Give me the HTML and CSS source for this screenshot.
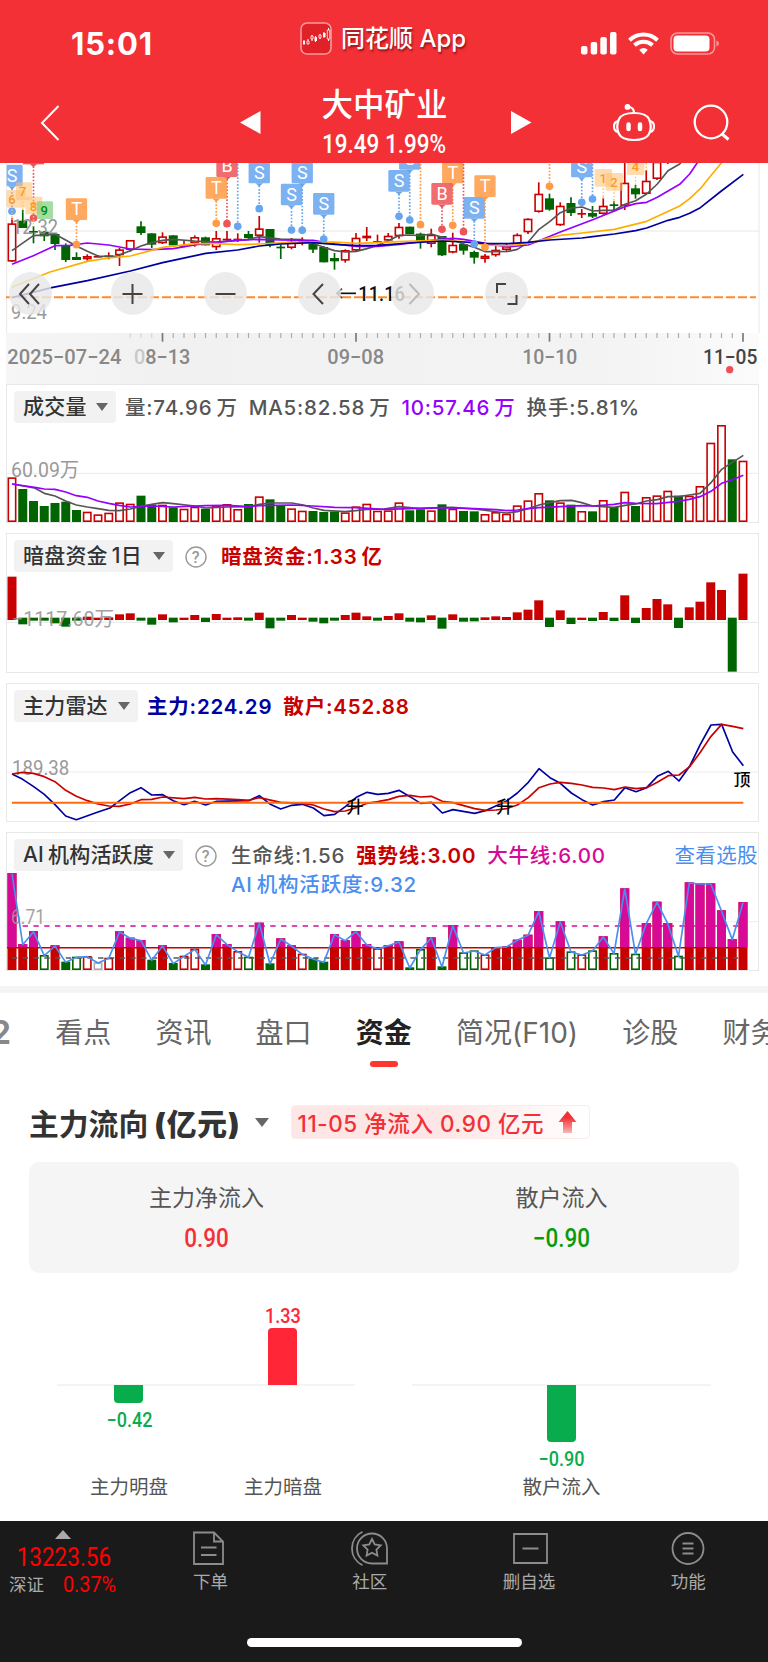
FILE: index.html
```html
<!DOCTYPE html>
<html lang="zh-CN">
<head>
  <meta charset="UTF-8">
  <meta name="viewport" content="width=device-width, initial-scale=1.0">
  <title>大中矿业</title>
  <link rel="stylesheet" href="styles.css">
</head>
<body>
  <header class="header">
    <div class="status">
      <div class="time">15:01</div>
      <div class="app-name">
        <svg width="32" height="33" viewBox="0 0 32 33">
          <rect x="1" y="1" width="30" height="31" rx="6" fill="#e02228" stroke="#f79a9c" stroke-width="1.6"/>
          <path d="M4 18v5M8 17v5M12 13v6M15.500 14v6M20 12v5M24 10v6M28.500 6v13" stroke="#fff" stroke-width="1"/>
          <path d="M3 19h2v3H3zM14.500 15h2.500v4h-2.500zM23 11h2.500v4H23z" fill="#fff"/>
          <path d="M7 19h2v3H7zM11 14h2v3h-2zM19 13h2v3h-2zM27.300 8h2.500v9h-2.500z" fill="#e02228" stroke="#fff" stroke-width=".8"/>
        </svg>
        <span>同花顺 App</span>
      </div>
      <div class="status-icons">
        <svg width="36" height="23" viewBox="0 0 36 23" fill="#fff">
          <rect x="0" y="14" width="6.500" height="8.500" rx="2"/>
          <rect x="9.700" y="10" width="6.500" height="12.500" rx="2"/>
          <rect x="19.300" y="5" width="6.500" height="17.500" rx="2"/>
          <rect x="29" y="0" width="6.500" height="22.500" rx="2"/>
        </svg>
        <svg width="31" height="23" viewBox="0 0 31 23" fill="none" stroke="#fff" stroke-width="4">
          <path d="M1.500 8.200a20 20 0 0 1 28 0"/>
          <path d="M6.500 13.300a13 13 0 0 1 18 0"/>
          <path d="M15.500 22.500l-4.300-4.700q4.300-3.400 8.600 0z" fill="#fff" stroke="none"/>
        </svg>
        <svg width="50" height="23" viewBox="0 0 50 23">
          <rect x="1" y="1" width="43.500" height="21" rx="6.500" fill="none" stroke="#f9989b" stroke-width="1.600"/>
          <rect x="3.500" y="3.500" width="36" height="16" rx="4" fill="#fff"/>
          <path d="M46.500 8.500v6q2.500-1 2.500-3t-2.500-3z" fill="#f9989b"/>
        </svg>
      </div>
    </div>
    <div class="nav">
      <svg class="back" width="20" height="36" viewBox="0 0 20 36" fill="none" stroke="#fff" stroke-width="2">
        <path d="M18.500 1L2 18l16.500 17"/>
      </svg>
      <div class="stock">
        <svg width="21" height="23" viewBox="0 0 21 23" fill="#fff"><path d="M20.500 0v23L0 11.500z"/></svg>
        <div class="stock-title">
          <h1>大中矿业</h1>
          <div class="price din">19.49 1.99%</div>
        </div>
        <svg width="21" height="23" viewBox="0 0 21 23" fill="#fff"><path d="M0 0v23l20.500-11.500z"/></svg>
      </div>
      <div class="nav-icons">
        <svg width="42" height="38" viewBox="0 0 42 38" fill="none" stroke="#fff" stroke-width="2.200">
          <path d="M21 9c9 0 13 2 15 6q3.500 8 0 15c-2 4-6 6-15 6s-13-2-15-6q-3.500-7 0-15c2-4 6-6 15-6z"/>
          <path d="M5 17q-4 1-4 5.500T5 28M37 17q4 1 4 5.500T37 28M21 9c0-4-2-6-6-6"/>
          <circle cx="14.500" cy="2.900" r="1.800" fill="#fff"/>
          <path d="M15.500 20.500v4.500M27 20.500v4.500" stroke-width="4.500" stroke-linecap="round"/>
        </svg>
        <svg width="37" height="37" viewBox="0 0 37 37" fill="none" stroke="#fff" stroke-width="2.300">
          <circle cx="18" cy="18" r="16.300"/>
          <path d="M28.500 29.500l7 6" stroke-width="3"/>
        </svg>
      </div>
    </div>
  </header>

  <section class="kline">
    <svg id="kline" width="768" height="170" viewBox="0 9 2304 510"></svg>
    <div class="tools">
      <button><svg viewBox="0 0 43 43"><path d="M20 12L11 22l9 10M30 12l-9 10 9 10"/></svg></button>
      <button><svg viewBox="0 0 43 43"><path d="M11.500 22h20M21.500 12v20"/></svg></button>
      <button><svg viewBox="0 0 43 43"><path d="M11.500 22h20"/></svg></button>
      <button><svg viewBox="0 0 43 43"><path d="M25 12L15.500 22l9.500 10"/></svg></button>
      <button class="off"><svg viewBox="0 0 43 43"><path d="M18.500 12l9.500 10-9.500 10"/></svg></button>
      <button><svg viewBox="0 0 43 43"><path d="M12 21v-9h9M31.500 23v9h-9"/></svg></button>
    </div>
  </section>
  <svg class="axis" id="axis" width="768" height="51" viewBox="0 519 2304 153"></svg>

  <section class="panel">
    <svg class="chart" id="volume" viewBox="21 15 2253 411"></svg>
    <div class="legend">
      <div class="pill w-volume">成交量<i class="caret"></i></div>
      <span class="gray">量:74.96<b>万</b></span>
      <span class="gray">MA5:82.58<b>万</b></span>
      <span class="purple">10:57.46<b>万</b></span>
      <span class="gray">换手:5.81%</span>
    </div>
  </section>

  <section class="panel tall">
    <svg class="chart" id="pool" viewBox="21 462 2253 414"></svg>
    <div class="legend">
      <div class="pill w-pool">暗盘资金<b>1</b>日<i class="caret"></i></div>
      <svg class="help" viewBox="0 0 22 22"><circle cx="11" cy="11" r="10"/><text x="11" y="16.500">?</text></svg>
      <span class="red strong">暗盘资金:1.33<b>亿</b></span>
    </div>
  </section>

  <section class="panel">
    <svg class="chart" id="radar" viewBox="21 27 2253 411"></svg>
    <div class="legend">
      <div class="pill w-radar">主力雷达<i class="caret"></i></div>
      <span class="navy strong">主力:224.29</span>
      <span class="red strong">散户:452.88</span>
    </div>
  </section>

  <section class="panel">
    <svg class="chart" id="active" viewBox="21 474 2253 411"></svg>
    <div class="legend">
      <div class="pill w-active">AI<b>机构活跃度</b><i class="caret"></i></div>
      <svg class="help" viewBox="0 0 22 22"><circle cx="11" cy="11" r="10"/><text x="11" y="16.500">?</text></svg>
      <div class="lines">
        <div class="line">
          <span class="gray">生命线:1.56</span>
          <span class="red strong">强势线:3.00</span>
          <span class="pink">大牛线:6.00</span>
        </div>
        <div class="line"><span class="blue">AI<b>机构活跃度</b>:9.32</span></div>
      </div>
      <a class="blue pick">查看选股</a>
    </div>
  </section>

  <nav class="tabs">
    <span class="tab cut">2</span>
    <span class="tab">看点</span>
    <span class="tab">资讯</span>
    <span class="tab">盘口</span>
    <span class="tab active">资金</span>
    <span class="tab">简况(F10)</span>
    <span class="tab">诊股</span>
    <span class="tab">财务</span>
  </nav>

  <main class="flow">
    <div class="flow-title">
      <h2>主力流向<b>(亿元)</b></h2>
      <i class="caret"></i>
      <div class="badge">
        <span>11-05 净流入 0.90 亿元</span>
        <svg width="19" height="23" viewBox="0 0 19 23">
          <defs><linearGradient id="up" x2="0" y2="1"><stop offset=".3" stop-color="#f23036"/><stop offset="1" stop-color="#fbb5b7"/></linearGradient></defs>
          <path d="M9.500 0L18.500 11h-4.500v11h-9V11H.5z" fill="url(#up)"/>
        </svg>
      </div>
    </div>
    <div class="card">
      <div class="card-item">
        <div class="label">主力净流入</div>
        <div class="value up din">0.90</div>
      </div>
      <div class="card-item">
        <div class="label">散户流入</div>
        <div class="value down din">−0.90</div>
      </div>
    </div>
    <div class="bars">
      <div class="group">
        <div class="col">
          <div class="above"></div>
          <div class="below"><div class="bar" style="height: 18px"></div><span class="din">−0.42</span></div>
          <div class="name">主力明盘</div>
        </div>
        <div class="col">
          <div class="above"><span class="din">1.33</span><div class="bar" style="height: 57px"></div></div>
          <div class="below"></div>
          <div class="name">主力暗盘</div>
        </div>
      </div>
      <div class="group">
        <div class="col">
          <div class="above"></div>
          <div class="below"><div class="bar" style="height: 57px"></div><span class="din">−0.90</span></div>
          <div class="name">散户流入</div>
        </div>
      </div>
    </div>
  </main>

  <footer class="footer">
    <div class="menu">
      <div class="index">
        <i class="tri"></i>
        <div class="point din">13223.56</div>
        <div class="rate"><span>深证</span><span class="din">0.37%</span></div>
      </div>
      <div class="item">
        <svg width="40" height="36" viewBox="0 0 40 36"><path d="M4 2.500h20l9 9V34H4zM24 2.500v9h9M11 17.500h15.500M11 25h15.500"/></svg>
        <span>下单</span>
      </div>
      <div class="item">
        <svg width="40" height="36" viewBox="0 0 40 36"><path d="M22 3.500a15 15 0 0 0 0 30h15V18.500a15 15 0 0 0-15-15zM12.500 1.800a18.500 18.500 0 0 0 0 33.400"/><path d="M22 9l2.700 5.500 6 .9-4.300 4.200 1 6L22 22.700l-5.400 2.900 1-6-4.300-4.200 6-.9z"/></svg>
        <span>社区</span>
      </div>
      <div class="item">
        <svg width="40" height="36" viewBox="0 0 40 36"><path d="M5 4h33v29H5zM13.500 18.500h16"/></svg>
        <span>删自选</span>
      </div>
      <div class="item">
        <svg width="40" height="36" viewBox="0 0 40 36"><circle cx="20" cy="18.500" r="15.500"/><path d="M14.500 13.500h11M14.500 18.500h11M14.500 23.500h11"/></svg>
        <span>功能</span>
      </div>
    </div>
    <div class="home"></div>
  </footer>

  <script src="charts.js"></script>
</body>
</html>
```
FILE: styles.css
```css
* {
  box-sizing: border-box;
}
body {
  margin: 0;
  width: 768px;
  height: 1662px;
  overflow: hidden;
  background: #fff;
  color: #333;
  font-family: Inter, "Noto Sans CJK SC", sans-serif;
}
svg {
  display: block;
  flex: none;
}
h1, h2 {
  margin: 0;
}
i {
  display: inline-block;
}
.din {
  font-family: Roboto, "Noto Sans CJK SC", sans-serif;
  font-weight: 500;
  transform: scaleX(0.9);
}

/* header */
.header {
  height: 163px;
  background: #f23036;
  color: #fff;
}
.status {
  display: grid;
  grid-template-columns: 300px 1fr 200px;
  height: 76px;
}
.time {
  padding: 26px 0 0 71px;
  font-size: 31px;
  line-height: 36px;
  font-weight: 700;
  letter-spacing: 0.8px;
}
.app-name {
  display: flex;
  gap: 9px;
  padding-top: 22px;
  font-size: 24px;
  line-height: 34px;
  font-weight: 500;
  white-space: nowrap;
  text-shadow: 1px 2px 2px rgba(90, 0, 0, 0.6);
}
.status-icons {
  display: flex;
  gap: 11px;
  padding: 32px 0 0 13px;
}
.nav {
  display: grid;
  grid-template-columns: 200px 1fr 200px;
  height: 87px;
}
.back {
  margin: 29px 0 0 40px;
}
.stock {
  display: flex;
  justify-content: space-between;
  padding: 0 36px 0 40px;
}
.stock > svg {
  margin-top: 35px;
}
.stock-title {
  margin-right: 3px;
  text-align: center;
  white-space: nowrap;
}
.stock-title h1 {
  padding-top: 6px;
  font-size: 31.5px;
  line-height: 46px;
  font-weight: 500;
}
.price {
  margin: 3px -20px 0;
  font-size: 25px;
  line-height: 28px;
}
.nav-icons {
  display: flex;
  justify-content: flex-end;
  gap: 38px;
  padding: 28px 38px 0 0;
}

/* k line */
.kline {
  position: relative;
  height: 170px;
}
.tools {
  position: absolute;
  left: 9px;
  top: 109px;
  display: flex;
  gap: 50.5px;
}
.tools button {
  width: 43px;
  height: 43px;
  padding: 0;
  border: none;
  border-radius: 50%;
  background: rgba(232, 232, 232, 0.82);
}
.tools button:first-child {
  margin-right: 8px;
}
.tools svg {
  width: 43px;
  height: 43px;
  fill: none;
  stroke: #444;
  stroke-width: 2;
}
.tools .off svg {
  stroke: #bbb;
}
svg text {
  font-family: Roboto, "Noto Sans CJK SC", sans-serif;
}

/* indicator panels */
.panel {
  display: grid;
  width: 753px;
  height: 139px;
  margin: 0 0 10px 6px;
  border: 1px solid #e8e8e8;
}
.panel.tall {
  height: 140px;
}
.chart, .legend {
  grid-area: 1 / 1;
}
.chart {
  width: 751px;
  height: 100%;
}
.legend {
  display: flex;
  gap: 11px;
  padding: 6px 0 0 7px;
  font-size: 20.5px;
  line-height: 34px;
  font-weight: 500;
  letter-spacing: 0.8px;
  white-space: nowrap;
}
.legend b {
  margin-left: 4px;
  font-weight: inherit;
}
.pill {
  display: flex;
  align-items: center;
  height: 32px;
  padding-left: 9px;
  margin-right: -2px;
  border-radius: 4px;
  background: #f2f2f2;
  font-size: 21px;
  letter-spacing: 0.2px;
}
.pill .caret {
  margin-left: auto;
  margin-right: 8px;
}
.w-volume { width: 102px; }
.w-pool { width: 159px; }
.w-radar { width: 124px; }
.w-active { width: 169px; }
.caret {
  border: 6px solid transparent;
  border-top: 8px solid #666;
  border-bottom: 0;
}
.help {
  width: 22px;
  height: 22px;
  margin: 6px 3px 0;
  fill: none;
  stroke: #999;
  stroke-width: 1.4;
}
.help text {
  fill: #999;
  stroke: none;
  font-size: 16px;
  text-anchor: middle;
}
.lines {
  line-height: 34px;
}
.line {
  display: flex;
  gap: 11px;
  height: 29px;
}
.pick {
  margin-left: auto;
  font-weight: 400;
  letter-spacing: 0.4px;
}
.strong { font-weight: 600; }
.gray { color: #555; }
.purple { color: #9500ff; }
.red { color: #c80000; }
.navy { color: #0000a0; }
.pink { color: #d60a96; }
.blue { color: #4a8ef0; }

/* tabs */
.tabs {
  display: flex;
  gap: 44.2px;
  height: 97px;
  margin-top: 15px;
  border-top: 7px solid #f4f4f4;
  font-size: 28px;
  line-height: 80px;
  color: #666;
  white-space: nowrap;
  overflow: hidden;
}
.tab.cut {
  width: 11px;
  direction: rtl;
  font-weight: 700;
  font-size: 32px;
  color: #888;
}
.tab.active {
  font-weight: 700;
  color: #222;
}
.tab.active::after {
  content: "";
  display: block;
  width: 28px;
  height: 6px;
  margin: -12px auto 0;
  border-radius: 3px;
  background: #ff3630;
}

/* capital flow */
.flow {
  height: 438px;
  padding: 0 29px;
}
.flow-title {
  display: flex;
  align-items: center;
  height: 78px;
  margin-bottom: 1px;
}
.flow-title h2 {
  font-size: 29.8px;
  font-weight: 700;
}
.flow-title b {
  margin-left: 6px;
  letter-spacing: 0.9px;
}
.flow-title .caret {
  margin: 0 22px 0 14px;
  border-width: 9px 7px 0;
}
.badge {
  display: flex;
  align-items: center;
  width: 299px;
  height: 34px;
  padding-left: 6px;
  gap: 14px;
  border: 1px solid #fdeaea;
  border-radius: 4px;
  background: linear-gradient(90deg, #fde6e6 50%, #fff);
  color: #f23036;
  font-size: 22.5px;
  font-weight: 500;
  letter-spacing: 0.55px;
  white-space: nowrap;
}
.card {
  display: grid;
  grid-template-columns: 1fr 1fr;
  height: 111px;
  border-radius: 10px;
  background: #f5f5f5;
  text-align: center;
}
.label {
  padding-top: 18px;
  font-size: 23px;
  line-height: 36px;
  color: #555;
}
.value {
  font-size: 25px;
  line-height: 46px;
}
.up { color: #f23036; }
.down { color: #0a9a0a; }
.bars {
  display: grid;
  grid-template-columns: 298px 299px;
  gap: 57px;
  padding: 25px 28px 0;
}
.group {
  display: grid;
  grid-auto-flow: column;
  grid-auto-columns: 154px;
  justify-content: center;
  background: linear-gradient(#f4f4f4, #f4f4f4) 0 86px / 100% 2px no-repeat;
}
.col {
  display: grid;
  grid-template-rows: 87px 88px 30px;
  justify-items: center;
}
.above, .below {
  display: flex;
  flex-direction: column;
  align-items: center;
  font-size: 20px;
  line-height: 24px;
}
.above {
  justify-content: flex-end;
  color: #ff2638;
}
.above .bar {
  border-radius: 4px 4px 0 0;
}
.below {
  gap: 5px;
  color: #08ac4c;
}
.below .bar {
  border-radius: 0 0 4px 4px;
}
.bar {
  width: 29px;
  background: currentColor;
}
.name {
  font-size: 19.5px;
  line-height: 28px;
  color: #555;
}

/* bottom menu */
.footer {
  height: 141px;
  background: #1a1a1a;
  color: #aaa;
}
.menu {
  display: flex;
  height: 117px;
}
.index {
  width: 131px;
  text-align: center;
}
.tri {
  display: block;
  width: 16px;
  margin: 9px 0 0 55px;
  border: 8px solid transparent;
  border-top: 0;
  border-bottom: 9px solid #aaa;
}
.point {
  margin: 5px 3px 0 0;
  color: #f00;
  font-size: 25px;
  font-weight: 400;
  line-height: 28px;
}
.rate {
  display: flex;
  gap: 16px;
  padding: 0 0 0 9px;
  font-size: 17.5px;
  line-height: 26px;
}
.rate .din {
  color: #f00;
  font-size: 22px;
  font-weight: 400;
}
.item {
  display: flex;
  flex-direction: column;
  align-items: center;
  width: 159.5px;
  padding-top: 9px;
  font-size: 17.5px;
  line-height: 32px;
}
.item svg {
  fill: none;
  stroke: #8c8c8c;
  stroke-width: 1.8;
}
.home {
  width: 275px;
  height: 9px;
  margin: 0 auto;
  border-radius: 5px;
  background: #fff;
}
```
FILE: charts.js
```js
const RED = "#c80000", GREEN = "#006400", PINK = "#d60a96", NAVY = "#0000a0";
const GRAY = "#555", PURPLE = "#9500ff", ORANGE = "#ffae00", BLUE = "#4a8ef0";

// x of the n-th trading day (3 units per css pixel)
const X = i => 36 + 32.25 * i;

const rect = (x, y, w, h, fill, stroke) =>
  `<rect x="${x}" y="${y}" width="${w}" height="${h}" fill="${fill}" stroke="${stroke || "none"}" stroke-width="4.8"/>`;
const line = (x1, y1, x2, y2, color, w, dash) =>
  `<path d="M${x1} ${y1}L${x2} ${y2}" stroke="${color}" stroke-width="${w || 3}" ${dash ? `stroke-dasharray="${dash}"` : ""}/>`;
const poly = (points, color, w) =>
  `<polyline points="${points}" fill="none" stroke="${color}" stroke-width="${w || 5}" stroke-linejoin="round"/>`;
const text = (x, y, w, size, color, str, extra) =>
  `<text x="${x}" y="${y}" textLength="${w}" lengthAdjust="spacingAndGlyphs" font-size="${size}" fill="${color}" ${extra || ""}>${str}</text>`;

// hollow or solid bar between two levels
function bar(i, top, bottom, color, solid) {
  return solid
    ? rect(X(i) - 13.5, top, 27, bottom - top, color)
    : rect(X(i) - 11, top + 2.4, 22, Math.max(bottom - top - 4.8, 1), "#fff", color);
}

/* ---------- k line ---------- */
// type, high, body top, body bottom, low
const candles = `r175,190,305,305 g150,182,204,204 g198,213,217,250 g213,215,229,243 g222,222,252,270 g250,256,300,306
g277,291,300,300 r283,288,298,302 r285,288,290,292 r277,286,289,298 r264,268,286,318 r240,240,270,275 g184,199,219,225
g220,220,254,264 r217,229,250,252 g226,226,256,256 r243,256,258,262 r226,231,249,260 g230,232,256,256 r213,234,262,270
r213,236,240,246 r220,236,240,246 g213,222,234,238 r168,205,228,248 g207,207,256,262 g254,260,263,297 r234,245,264,268
r232,244,246,256 g250,252,269,279 g258,261,307,307 g279,294,304,329 r268,270,302,308 r219,233,272,276 r201,227,235,243
r224,243,246,250 r219,227,242,248 r189,200,229,236 g200,200,222,222 g218,221,244,266 r206,224,252,262 g228,228,286,288
r218,254,278,280 g250,252,272,284 g272,276,293,311 r282,287,297,308 r256,269,286,290 r250,258,270,276 r220,224,254,256
r175,176,217,222 r67,101,156,158 g101,115,149,152 r127,137,196,198 g112,129,159,168 r147,159,163,174 g138,159,170,174
r113,137,162,164 g124,133,137,152 r5,68,138,150 g75,85,103,116 r30,62,102,104 r0,5,57,60 r0,2,4,12`.split(/\s+/);

let k = line(20, 9, 20, 519, "#e8e8e8") + line(2277, 9, 2277, 519, "#e8e8e8") + line(20, 213, 2277, 213, "#e8e8e8");
k += text(33, 476, 108, 61, "#999", "9.24");
k += line(18, 412, 2268, 412, "#ff8a30", 6, "27 9");
candles.forEach((c, i) => {
  const [hi, top, bottom, lo] = c.slice(1).split(",").map(Number);
  const color = c[0] === "r" ? RED : GREEN;
  k += line(X(i), hi, X(i), lo, color, 5);
  k += bottom - top < 6 ? rect(X(i) - 13, top, 26, 5, color) : bar(i, top, bottom, color, c[0] === "g");
});
k += text(36, 221, 138, 61, "#8c8c8c", "12.32", 'opacity=".9"');
k += poly("36,272 100,227 165,223 197,240 229,258 262,274 294,288 326,290 350,288 391,272 423,258 455,248 488,241 520,238 584,243 649,246 746,238 778,230 842,237 907,239 939,250 971,262 1004,272 1036,276 1069,274 1101,266 1133,256 1165,242 1198,226 1230,225 1262,227 1294,222 1327,232 1359,241 1391,252 1423,262 1456,275 1488,275 1524,274 1552,268 1584,247 1617,208 1649,185 1681,158 1714,144 1746,141 1778,153 1810,151 1843,151 1875,133 1907,122 1940,102 1972,72 2004,32 2039,12 2050,0", GRAY);
k += poly("36,313 100,287 165,257 210,256 262,249 326,255 391,267 455,269 520,266 584,255 649,247 713,241 778,238 842,240 940,241 1004,252 1069,259 1133,259 1198,253 1262,245 1327,237 1359,235 1391,238 1456,250 1524,261 1584,255 1617,242 1681,216 1778,179 1875,140 1907,131 1940,127 1972,112 2039,73 2069,42 2096,2", PURPLE);
k += poly("36,382 150,336 262,304 326,294 391,288 488,262 584,251 649,251 713,254 778,252 874,247 1004,246 1069,250 1133,248 1198,245 1327,240 1391,245 1456,255 1524,257 1584,250 1617,242 1681,226 1746,219 1843,208 1940,184 2039,138 2069,116 2101,86 2134,45 2170,2", ORANGE);
k += poly("36,413 155,383 262,362 391,333 488,308 617,280 713,270 778,258 842,252 939,248 1004,253 1069,257 1133,256 1230,249 1327,243 1391,246 1456,250 1524,251 1584,247 1649,240 1746,234 1778,230 1843,222 1907,212 1940,204 2004,181 2039,172 2069,160 2101,143 2164,93 2230,43", NAVY);

// trade marks: letter, day, box top, dot y
const markColor = { S: "#68a5f0", T: "#ff9a45", B: "#ec5559" };
const marks = [
  ["S", 0, 14, 154], ["B", 2, -53, 174], ["T", 6, 115, 254], ["B", 20, -14, 191], ["T", 19, 51, 190], ["S", 21, -80, 199],
  ["S", 23, 5, 146], ["S", 26, 71, 210], ["S", 27, 5, 211], ["S", 29, 99, 237], ["S", 37, -36, 180], ["S", 36, 30, 169],
  ["T", 38, -80, 194], ["T", 41, 5, 196], ["B", 40, 69, 208], ["B", 42, -80, 215], ["S", 43, 111, 252], ["T", 44, 46, 262],
  ["T", 50, -80, 79], ["S", 54, -80, 117], ["S", 53, -13, 127]
];
marks.forEach(([letter, i, top, dot]) => {
  const c = markColor[letter], x = X(i), left = Math.max(x - 32, 20);
  k += line(x, top + 72, x, dot, c, 5, "5 5");
  k += `<circle cx="${x}" cy="${dot}" r="11.500" fill="${c}"/>`;
  if (top < -50) {
    // only the lower edge of the tag reaches into view
    if (top > -60) k += rect(x - 32, top + 60, 64, 6, c) + `<path d="M${x - 11} ${top + 65}h22l-11 10z" fill="${c}"/>`;
    return;
  }
  k += `<rect x="${left}" y="${top}" width="${x + 32 - left}" height="65" rx="4" fill="${c}" opacity=".86"/>`;
  k += `<path d="M${x - 11} ${top + 65}h22l-11 10z" fill="${c}"/>`;
  k += `<text x="${x}" y="${top + 51}" font-size="54" text-anchor="middle" fill="#fff">${letter}</text>`;
});
// sequence marks
[["6", 0, 20, 90, 56], ["7", 1, 48, 67, 48], ["8", 2, 76, 110, 51], ["9", 3, 110, 124, 49],
 ["1", 55, 1784, 27, 52], ["2", 56, 1817, 39, 52], ["4", 58, 1881, -8, 52]].forEach(([n, i, left, top, w]) => {
  const nine = n === "9";
  k += `<rect x="${left}" y="${top}" width="${w}" height="53" rx="4" fill="${nine ? "#7fd07f" : "#ffbf70"}" opacity="${nine ? 0.7 : 0.55}"/>`;
  if (!nine) k += line(X(i), top + 58, X(i), top + 90, "#ffc266", 4, "5 5");
  k += `<text x="${X(i)}" y="${top + 42}" font-size="39" font-weight="500" text-anchor="middle" fill="${nine ? "#009000" : "#ff9a20"}">${n}</text>`;
});
k += line(X(59), 9, X(59), 32, "#ffc266", 4, "5 5");
k += line(1012, 400, 1068, 400, "#111", 5) + `<path d="M1026 386l-16 14 16 14" fill="none" stroke="#444" stroke-width="5"/>`;
k += text(1075, 422, 140, 59, "#111", "11.16", 'font-weight="500"');
document.getElementById("kline").innerHTML = k;

/* ---------- time axis ---------- */
let a = `<defs><linearGradient id="g"><stop offset="0" stop-color="#f6f6f6"/><stop offset=".2" stop-color="#f1f1f1"/><stop offset=".8" stop-color="#f3f3f3"/><stop offset="1" stop-color="#fbfbfb"/></linearGradient></defs>`;
a += rect(18, 519, 2259, 153, "url(#g)");
for (let i = 11; i < 69; i++) {
  const major = [14, 32, 50, 68].includes(i);
  a += line(X(i), 518, X(i), major ? 545 : 534, major ? "#777" : i < 14 ? "#d4d4d4" : "#aaa", major ? 5 : 3.5);
}
const medium = 'font-weight="500"';
a += text(22, 612, 342, 61, "#888", "2025−07−24", medium);
a += text(402, 612, 169, 61, "#888", '<tspan fill="#c8c8c8">0</tspan>8−13', medium);
a += text(982, 612, 170, 61, "#888", "09−08", medium) + text(1567, 612, 165, 61, "#888", "10−10", medium);
a += text(2109, 612, 163, 61, "#444", "11−05", medium);
a += `<circle cx="2189" cy="629" r="11" fill="#f05055"/>`;
document.getElementById("axis").innerHTML = a;

/* ---------- volume ---------- */
const volume = "r292 g327 g363 g378 g369 g365 g390 r395 r403 r398 r367 r371 g347 g374 r374 g382 r386 r380 g386 r376 r372 r387 g372 r349 g358 g376 r385 r392 g393 g396 g395 r397 r379 r371 r392 r391 r367 g391 g388 r391 g373 r386 g393 g394 r402 r396 r401 r376 r361 r339 g361 r367 g374 r393 g394 r360 g381 r335 g378 r351 r346 r332 g347 r347 r318 r188 r135 g238 r242".split(" ");
let v = line(21, 280, 2274, 280, "#ececec") + text(33, 290, 205, 61, "#999", "60.09万");
volume.forEach((d, i) => v += bar(i, +d.slice(1), 426, d[0] === "r" ? RED : GREEN, d[0] === "g"));
v += poly("36,312 104,324 133,340 165,348 197,363 229,375 262,381 294,386 326,391 358,392 391,387 423,379 455,373 488,368 520,371 584,378 617,384 681,381 746,380 778,373 811,369 875,369 910,375 940,384 972,391 1035,395 1067,392 1100,388 1152,387 1197,380 1261,386 1326,383 1358,382 1423,387 1520,399 1552,395 1584,386 1617,375 1649,368 1681,362 1715,361 1745,368 1778,378 1842,382 1875,376 1907,372 1939,363 1972,359 2004,350 2036,350 2068,345 2100,340 2133,308 2165,268 2197,247 2230,226", GRAY);
v += poly("36,312 104,322 133,327 165,328 197,336 229,347 262,352 294,363 326,370 358,376 391,381 455,378 520,381 617,377 681,376 746,380 778,377 875,375 940,378 1004,382 1067,383 1152,388 1229,386 1326,383 1423,386 1488,389 1520,392 1552,390 1584,386 1617,383 1681,380 1745,377 1778,378 1842,373 1875,368 1907,370 1970,371 2036,364 2068,358 2100,350 2133,334 2165,310 2197,299 2230,286", PURPLE);
document.getElementById("volume").innerHTML = v;

/* ---------- dark pool money ---------- */
const pool = [590, 733, 722, 722, 730, 740, 722, 710, 713, 712, 703, 700, 722, 734, 703, 727, 713, 705, 726, 702, 713, 712, 722, 698, 745, 722, 705, 713, 725, 730, 722, 705, 698, 709, 722, 708, 700, 725, 727, 706, 746, 703, 725, 724, 712, 709, 711, 697, 689, 661, 741, 691, 732, 713, 723, 696, 723, 646, 729, 684, 657, 673, 744, 682, 665, 607, 630, 875, 581];
let p = line(21, 727, 2274, 727, "#e8e8e8");
pool.forEach((y, i) => p += y < 716 ? bar(i, y, 720, RED, true) : bar(i, 713, y, GREEN, true));
p += text(36, 738, 306, 61, "#999", "−1117.60万", 'opacity=".9"');
document.getElementById("pool").innerHTML = p;

/* ---------- radar ---------- */
let r = line(21, 291, 2274, 291, "#ececec") + text(36, 300, 172, 61, "#999", "189.38");
r += poly("36,297 68,313 100,334 133,358 165,389 197,423 229,434 294,411 330,399 360,376 391,353 423,338 455,360 488,359 520,377 552,389 584,379 617,390 650,379 746,377 778,362 811,388 842,402 875,391 907,388 940,399 972,422 1004,418 1036,395 1069,367 1101,352 1133,358 1165,355 1197,346 1230,365 1262,385 1294,382 1327,414 1359,404 1424,415 1456,407 1520,378 1552,354 1585,322 1617,281 1650,308 1681,325 1714,354 1746,374 1778,390 1811,380 1843,375 1875,338 1908,350 1940,338 1972,304 2005,289 2037,318 2069,274 2101,208 2133,150 2165,148 2198,231 2230,272", NAVY);
r += poly("36,297 68,292 100,295 133,305 165,320 197,346 229,364 262,377 294,387 326,393 358,394 391,387 423,374 455,373 488,366 552,371 584,367 617,372 650,371 713,374 746,376 778,368 842,382 907,385 940,390 972,402 1004,410 1036,408 1069,398 1101,385 1133,380 1165,374 1197,364 1230,361 1262,366 1294,364 1327,379 1359,383 1391,392 1424,401 1456,406 1488,405 1520,401 1552,390 1585,368 1617,338 1650,327 1681,322 1714,325 1746,330 1778,337 1811,339 1843,344 1875,336 1908,341 1940,338 1972,322 2005,302 2037,300 2069,275 2101,232 2133,184 2165,148 2198,154 2230,161", RED);
r += line(36, 383, 2230, 383, "#ff6a10", 6);
[["升", 1065, 413], ["升", 1514, 413], ["顶", 2226, 332]].forEach(([s, x, y]) =>
  r += `<text x="${x}" y="${y}" font-size="51" font-weight="500" text-anchor="middle" fill="#000">${s}</text>`);
document.getElementById("radar").innerHTML = r;

/* ---------- institution activity ---------- */
// R solid red, g solid green, H hollow red, G hollow green, w hollow gray
const active = "R594 R807 R768 G840 R811 g860 G845 H843 w862 H848 R769 R788 R795 g854 R811 g864 H842 H821 g868 R777 R807 H828 G845 R743 g865 R790 R811 H836 g850 g860 R777 R795 R768 R807 H820 R810 R799 g877 G822 R787 g874 R750 G832 G826 H838 R816 R814 R794 R779 R708 G847 R739 G829 H838 G826 R784 G834 R640 G836 R744 R680 R744 G842 R622 R625 R625 R706 R792 R681".split(" ");
const activeColor = { R: RED, H: RED, g: GREEN, G: GREEN, w: "#aaa" };
let s = line(21, 740, 2274, 740, "#ececec");
active.forEach((d, i) => {
  const y = +d.slice(1);
  s += bar(i, y, 885, activeColor[d[0]], "Rg".includes(d[0]));
  if (d[0] === "R" && y < 818) s += bar(i, y, 818, PINK, true);
});
s += text(33, 747, 102, 61, "#999", "6.71", 'opacity=".9"');
s += line(68, 753, 2214, 753, PINK, 4.5, "16 16.300") + line(21, 818, 2230, 818, RED, 4.5) + line(36, 849, 2214, 849, "#555", 4.5, "16 16.300");
s += poly(active.map((d, i) => `${X(i)},${+d.slice(1) + 2}`).join(" "), BLUE);
document.getElementById("active").innerHTML = s;
```
